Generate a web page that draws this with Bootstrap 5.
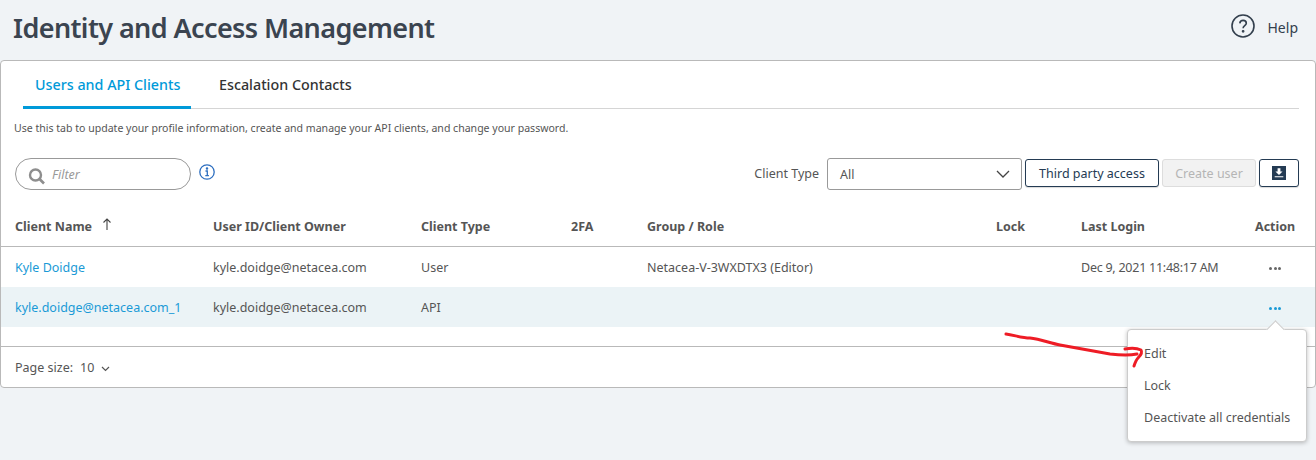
<!DOCTYPE html>
<html lang="en">
<head>
  <meta charset="UTF-8" />
  <meta name="viewport" content="width=device-width, initial-scale=1.0" />
  <title>Identity and Access Management</title>
  <link href="https://cdn.jsdelivr.net/npm/bootstrap@5.3.0/dist/css/bootstrap.min.css" rel="stylesheet">
  <style>
    body { background: #f0f3f6; font-family: "Noto Sans", sans-serif; font-size: 12.5px; color: #555; overflow: hidden; height: 460px; position: relative; }
    .page-head { height: 60px; padding: 0 12px 3px 13px; }
    .page-title { font-size: 27px; font-weight: 600; color: #3b4450; margin: 0; letter-spacing: -.6px; }
    .help-link { color: #333f4d; font-size: 14px; gap: 13px; margin-top: -2px; margin-right: 6px; }
    .help-link svg { margin-bottom: 4px; }
    .main-panel { background: #fff; border: 1px solid #b9b9b9; border-radius: 4px; height: 328px; }
    .tab-bar { margin: 0 16px 0 22px; height: 48px; border-bottom: 1px solid #d5d5d5; gap: 4px; }
    .tab-item { padding: 0 12px; line-height: 47px; height: 48px; font-size: 14.3px; font-weight: 500; color: #333; text-decoration: none; width: 168px; white-space: nowrap; }
    .tab-item.on { color: #009ad9; border-bottom: 3px solid #009ad9; }
    .tab-item + .tab-item { padding-left: 24px; }
    .tab-note { font-size: 10.55px; margin: 11px 0 0 13px; color: #555; line-height: 16px; height: 16px; }
    .tool-row { margin: 22px 16px 0 14px; height: 32px; }
    .filter-box { width: 176px; height: 32px; border: 1px solid #999; border-radius: 16px; padding-left: 12px; gap: 6px; font-style: italic; color: #999; }
    .filter-box svg { margin-top: 4px; }
    .filter-box span { margin-top: 2px; }
    .info-mark { margin: -4px 0 0 8px; }
    .type-label { color: #555; margin-right: 8px; }
    .type-select { width: 195px; height: 32px; border: 1px solid #999; border-radius: 3px; padding: 0 11px 0 12px; color: #555; }
    .type-select span { margin-top: 2px; }
    .act-btn { height: 28px; border: 1px solid #243b53; border-radius: 3px; background: #fff; color: #243b53; font-size: 12.5px; padding: 3px 0 0; margin-left: 3px; margin-top: -2px; box-shadow: 0 1px 1px rgba(0,0,0,.15); }
    .act-btn.wide { width: 134px; }
    .act-btn.off { width: 94px; background: #f2f2f2; border-color: #ddd; color: #b5b5b5; box-shadow: none; }
    .act-btn.ico { width: 40px; padding: 0; }
    .client-table { table-layout: fixed; width: 1314px; margin: 16px 0 0; border-collapse: collapse; font-size: 12.5px; }
    .client-table th { height: 40px; padding: 4px 0 0; font-weight: 700; color: #555; font-size: 12.5px; vertical-align: middle; border-bottom: 1px solid #b9b9b9; background: transparent; }
    .client-table td { height: 41px; padding: 4px 0 0; color: #555; vertical-align: middle; border: 0; background: transparent; }
    .client-table .pick td { background: #ebf3f6; height: 40px; padding-top: 2px; }
    .client-table a { color: #1a9ad6; text-decoration: none; }
    .c1 { width: 212px; padding-left: 14px !important; }
    .c2 { width: 208px; } .c3 { width: 150px; } .c4 { width: 76px; } .c5 { width: 349px; } .c6 { width: 85px; } .c7 { width: 174px; } .c8 { width: 60px; }
    .sort-arrow { margin-left: 7px; vertical-align: 1px; }
    .login-time { letter-spacing: -.25px; }
    .table-foot { border-top: 1px solid #b9b9b9; margin-top: 19px; height: 40px; padding: 4px 0 0 14px; gap: 7px; color: #555; }
    .dots { display: flex; gap: 1.500px; margin-left: 14px; }
    .dots i { width: 3px; height: 3px; border-radius: 50%; background: #666; display: block; }
    .pick .dots i { background: #1a9ad6; }
    .row-menu { position: absolute; left: 1127px; top: 329px; width: 180px; height: 113px; background: #fff; border: 1px solid #ccc; border-radius: 4px; box-shadow: 0 1px 4px rgba(0,0,0,.25); padding: 8px 16px; z-index: 5; color: #555; }
    .row-menu::before { content: ""; position: absolute; top: -7px; right: 24px; width: 13px; height: 13px; background: #fff; border-left: 1px solid #ccc; border-top: 1px solid #ccc; transform: rotate(45deg); }
    .menu-line { height: 32px; line-height: 32px; white-space: nowrap; position: relative; }
    .scribble { position: absolute; left: 0; top: 0; z-index: 6; pointer-events: none; }
  </style>
</head>
<body>

  <div class="page-head d-flex align-items-center justify-content-between">
    <h1 class="page-title">Identity and Access Management</h1>
    <div class="help-link d-flex align-items-center">
      <svg width="24" height="24" viewBox="0 0 24 24" fill="none" stroke="#333f4d" stroke-width="1.6"><circle cx="12" cy="12" r="11"/><path d="M8.8 9.4c.2-2 1.6-3 3.3-3 1.800 0 3.200 1.200 3.200 2.800 0 2.400-3.200 2.500-3.200 5"/><circle cx="12.100" cy="17.300" r=".6" fill="#333f4d"/></svg>
      <span>Help</span>
    </div>
  </div>

  <div class="main-panel">
    <div class="tab-bar d-flex">
      <a class="tab-item on" href="#">Users and API Clients</a>
      <a class="tab-item" href="#">Escalation Contacts</a>
    </div>
    <div class="tab-note">Use this tab to update your profile information, create and manage your API clients, and change your password.</div>

    <div class="tool-row d-flex align-items-center">
      <div class="filter-box d-flex align-items-center">
        <svg width="18" height="18" viewBox="0 0 18 18" fill="none" stroke="#8e8e8e"><circle cx="7.500" cy="8" r="5.500" stroke-width="2.400"/><path d="M11.500 12l4.500 4.500" stroke-width="2.600"/></svg>
        <span>Filter</span>
      </div>
      <svg class="info-mark" width="16" height="16" viewBox="0 0 16 16" fill="none" stroke="#2e6fc0" stroke-width="1.300"><circle cx="8" cy="8" r="7.200"/><path d="M6.500 7h1.800v4.500M6.300 11.600h3.600"/><circle cx="8" cy="4.500" r=".6" fill="#2e6fc0"/></svg>
      <div class="ms-auto d-flex align-items-center">
        <span class="type-label">Client Type</span>
        <div class="type-select d-flex align-items-center justify-content-between">
          <span>All</span>
          <svg width="14" height="8" viewBox="0 0 14 8" fill="none" stroke="#444" stroke-width="1.300"><path d="M1 1l6 6 6-6"/></svg>
        </div>
        <button class="act-btn wide" type="button">Third party access</button>
        <button class="act-btn off" type="button">Create user</button>
        <button class="act-btn ico" type="button">
          <svg width="14" height="14" viewBox="0 0 13 13"><path fill="#243b53" d="M0 0h13v13H0z"/><path fill="#fff" d="M5.200 2h2.600v3.200h2L6.500 8.400 3.200 5.200h2zM2.500 9.500h8v1h-8z"/></svg>
        </button>
      </div>
    </div>

    <table class="table client-table">
      <thead>
        <tr>
          <th class="c1">Client Name
            <svg class="sort-arrow" width="10" height="12" viewBox="0 0 10 12" fill="none" stroke="#444" stroke-width="1.100"><path d="M5 12V1M1.500 4.500L5 1l3.500 3.500"/></svg>
          </th>
          <th class="c2">User ID/Client Owner</th>
          <th class="c3">Client Type</th>
          <th class="c4">2FA</th>
          <th class="c5">Group / Role</th>
          <th class="c6">Lock</th>
          <th class="c7">Last Login</th>
          <th class="c8">Action</th>
        </tr>
      </thead>
      <tbody>
        <tr>
          <td class="c1"><a href="#">Kyle Doidge</a></td>
          <td>kyle.doidge@netacea.com</td>
          <td>User</td>
          <td></td>
          <td>Netacea-V-3WXDTX3 (Editor)</td>
          <td></td>
          <td class="login-time">Dec 9, 2021 11:48:17 AM</td>
          <td><span class="dots"><i></i><i></i><i></i></span></td>
        </tr>
        <tr class="pick">
          <td class="c1"><a href="#">kyle.doidge@netacea.com_1</a></td>
          <td>kyle.doidge@netacea.com</td>
          <td>API</td>
          <td></td>
          <td></td>
          <td></td>
          <td></td>
          <td><span class="dots"><i></i><i></i><i></i></span></td>
        </tr>
      </tbody>
    </table>

    <div class="table-foot d-flex align-items-center">
      <span>Page size:</span>
      <span>10</span>
      <svg width="9" height="6" viewBox="0 0 9 6" fill="none" stroke="#555" stroke-width="1.200"><path d="M1 1l3.500 3.500L8 1"/></svg>
    </div>
  </div>

  <div class="row-menu">
    <div class="menu-line">Edit</div>
    <div class="menu-line">Lock</div>
    <div class="menu-line">Deactivate all credentials</div>
  </div>

  <svg class="scribble" width="1316" height="460" viewBox="0 0 1316 460" fill="none" stroke="#ee1c25" stroke-width="3" stroke-linecap="round" stroke-linejoin="round">
    <path d="M1006 334c8 1 16 4 24 4 10 1 20 5 30 7 16 3 34 6 50 9 8 1 18 2 27 0"/>
    <path d="M1125 349c5-1 12-1 16 1 2 3-1 6-3 8-2 2-3 5-4 8"/>
  </svg>

  <script src="https://cdn.jsdelivr.net/npm/bootstrap@5.3.0/dist/js/bootstrap.bundle.min.js"></script>
</body>
</html>
